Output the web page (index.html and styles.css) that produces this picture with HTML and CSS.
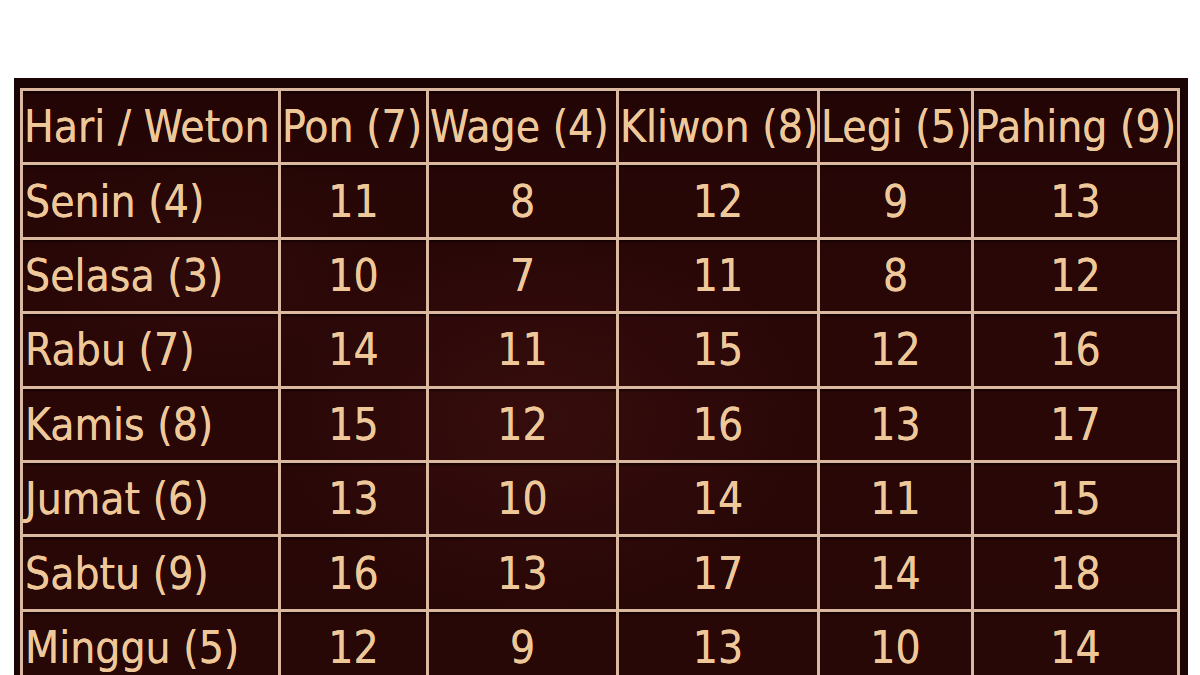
FILE: index.html
```html
<!DOCTYPE html>
<html>
<head>
<meta charset="utf-8">
<link rel="stylesheet" href="styles.css">
</head>
<body>
<div class="frame">
  <div class="grid">
    <div class="cell head">Hari / Weton</div>
    <div class="cell head">Pon (7)</div>
    <div class="cell head">Wage (4)</div>
    <div class="cell head">Kliwon (8)</div>
    <div class="cell head">Legi (5)</div>
    <div class="cell head">Pahing (9)</div>

    <div class="cell day">Senin (4)</div>
    <div class="cell num">11</div><div class="cell num">8</div><div class="cell num">12</div><div class="cell num">9</div><div class="cell num">13</div>

    <div class="cell day">Selasa (3)</div>
    <div class="cell num">10</div><div class="cell num">7</div><div class="cell num">11</div><div class="cell num">8</div><div class="cell num">12</div>

    <div class="cell day">Rabu (7)</div>
    <div class="cell num">14</div><div class="cell num">11</div><div class="cell num">15</div><div class="cell num">12</div><div class="cell num">16</div>

    <div class="cell day">Kamis (8)</div>
    <div class="cell num">15</div><div class="cell num">12</div><div class="cell num">16</div><div class="cell num">13</div><div class="cell num">17</div>

    <div class="cell day">Jumat (6)</div>
    <div class="cell num">13</div><div class="cell num">10</div><div class="cell num">14</div><div class="cell num">11</div><div class="cell num">15</div>

    <div class="cell day">Sabtu (9)</div>
    <div class="cell num">16</div><div class="cell num">13</div><div class="cell num">17</div><div class="cell num">14</div><div class="cell num">18</div>

    <div class="cell day">Minggu (5)</div>
    <div class="cell num">12</div><div class="cell num">9</div><div class="cell num">13</div><div class="cell num">10</div><div class="cell num">14</div>
  </div>
</div>
</body>
</html>
```
FILE: styles.css
```css
html, body {
  margin: 0;
  padding: 0;
  background: #ffffff;
  overflow: hidden;
}
body {
  width: 1200px;
  height: 675px;
}
.frame {
  margin-top: 78px;
  margin-left: 14px;
  width: 1174px;
  height: 640px;
  box-sizing: border-box;
  padding: 10px 8px 0 6px;
  background: #1a0404;
}
.grid {
  display: grid;
  grid-template-columns: 255px 145px 187px 198px 151px 203px;
  grid-auto-rows: 71.4px;
  gap: 3px;
  padding: 3px;
  background: #dbb9a0;
  width: max-content;
}
.cell {
  background:
    radial-gradient(ellipse 380px 280px at 540px 420px, rgba(70, 20, 20, 0.45), rgba(70, 20, 20, 0) 70%),
    radial-gradient(ellipse 260px 180px at 220px 260px, rgba(60, 16, 16, 0.3), rgba(60, 16, 16, 0) 70%),
    linear-gradient(180deg, #200404 0%, #2a0707 45%, #280707 100%);
  background-attachment: fixed;
  box-shadow: inset 0 3px 2px -1px rgba(10, 0, 0, 0.6);
  color: #efc899;
  text-shadow: 0 0 0.6px #efc899;
  font-family: "DejaVu Sans Condensed", "DejaVu Sans", sans-serif;
  font-size: 44px;
  display: flex;
  align-items: center;
  white-space: nowrap;
  overflow: visible;
}
.head {
  justify-content: flex-start;
  padding-left: 1px;
}
.day {
  padding-left: 2px;
}
.num {
  justify-content: center;
}
```
